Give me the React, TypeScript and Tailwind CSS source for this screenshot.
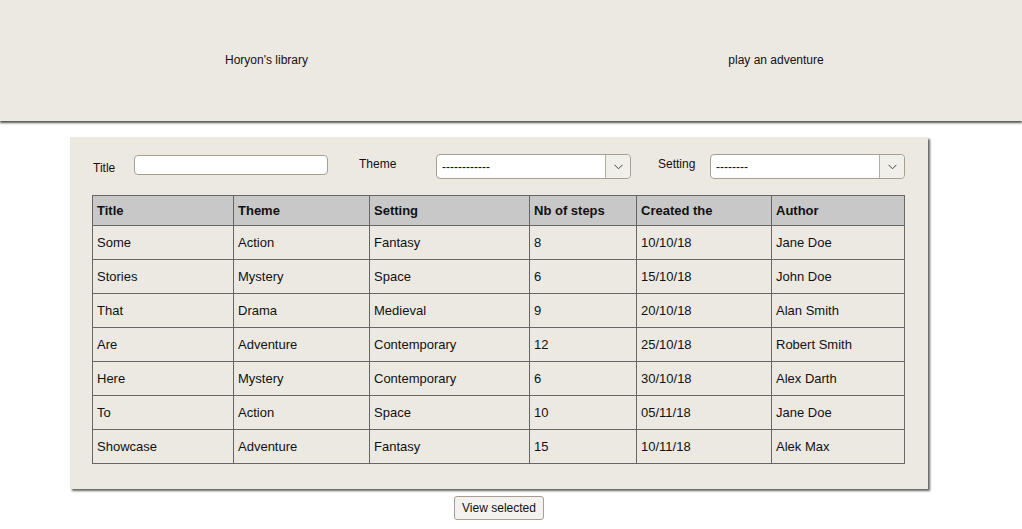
import React from 'react';

interface Story {
  title: string;
  theme: string;
  setting: string;
  steps: number;
  created: string;
  author: string;
}

const stories: Story[] = [
  { title: 'Some', theme: 'Action', setting: 'Fantasy', steps: 8, created: '10/10/18', author: 'Jane Doe' },
  { title: 'Stories', theme: 'Mystery', setting: 'Space', steps: 6, created: '15/10/18', author: 'John Doe' },
  { title: 'That', theme: 'Drama', setting: 'Medieval', steps: 9, created: '20/10/18', author: 'Alan Smith' },
  { title: 'Are', theme: 'Adventure', setting: 'Contemporary', steps: 12, created: '25/10/18', author: 'Robert Smith' },
  { title: 'Here', theme: 'Mystery', setting: 'Contemporary', steps: 6, created: '30/10/18', author: 'Alex Darth' },
  { title: 'To', theme: 'Action', setting: 'Space', steps: 10, created: '05/11/18', author: 'Jane Doe' },
  { title: 'Showcase', theme: 'Adventure', setting: 'Fantasy', steps: 15, created: '10/11/18', author: 'Alek Max' },
];

const columns = ['Title', 'Theme', 'Setting', 'Nb of steps', 'Created the', 'Author'];
const widths = ['w-[141px]', 'w-[136px]', 'w-[160px]', 'w-[107px]', 'w-[135px]', 'w-[133px]'];

function FakeSelect({ value }: { value: string }) {
  return (
    <div className="flex h-[25px] w-[195px] shrink-0 rounded-[4px] border border-[#a89f90] bg-white">
      <div className="flex flex-1 items-center pl-[5px] text-[12px] text-[#111]">{value}</div>
      <div className="flex w-[25px] items-center justify-center rounded-r-[4px] border-l border-[#b5ad9f] bg-[#f1efea]">
        <svg width="9" height="6" viewBox="0 0 9 6" fill="none">
          <path d="M0.5 0.8 L4.5 4.8 L8.5 0.8" stroke="#444" strokeWidth="1" />
        </svg>
      </div>
    </div>
  );
}

export default function App() {
  return (
    <div className="min-h-[529px] bg-white font-['Liberation_Sans',Arial,sans-serif] text-[#111]">
      {/* Top bar */}
      <header className="flex h-[121px] items-center bg-[#ece9e3] pb-[2px] pl-[14px] shadow-[0_2px_2px_#555]">
        <div className="w-[505px] shrink-0 text-center text-[12px]">Horyon's library</div>
        <div className="ml-[57px] w-[400px] shrink-0 text-center text-[12px]">play an adventure</div>
      </header>

      {/* Library panel */}
      <section className="ml-[70px] mt-[16px] w-[858px] bg-[#ece9e3] pb-[25px] pl-[22px] pr-[24px] pt-[17px] shadow-[2px_2px_2px_#666]">
        <div className="flex h-[41px] items-start pl-[1px]">
          <label className="mt-[5px] w-[41px] shrink-0 text-[12px]">Title</label>
          <input className="mt-[1px] h-[20px] w-[194px] shrink-0 rounded-[4px] border border-[#a89f90] bg-white outline-none" />
          <label className="ml-[31px] mt-[1px] w-[77px] shrink-0 text-[12px]">Theme</label>
          <FakeSelect value="------------" />
          <label className="ml-[27px] mt-[1px] w-[52px] shrink-0 text-[12px]">Setting</label>
          <FakeSelect value="--------" />
        </div>

        <table className="w-[812px] table-fixed border-collapse text-[13px]">
          <colgroup>
            {widths.map((w) => (
              <col key={w} className={w} />
            ))}
          </colgroup>
          <thead>
            <tr className="h-[30px] bg-[#c8c8c8]">
              {columns.map((c) => (
                <th key={c} className="border border-[#666] pl-[4px] text-left font-bold">
                  {c}
                </th>
              ))}
            </tr>
          </thead>
          <tbody>
            {stories.map((s) => (
              <tr key={s.title} className="h-[34px]">
                <td className="border border-[#666] pl-[4px]">{s.title}</td>
                <td className="border border-[#666] pl-[4px]">{s.theme}</td>
                <td className="border border-[#666] pl-[4px]">{s.setting}</td>
                <td className="border border-[#666] pl-[4px]">{s.steps}</td>
                <td className="border border-[#666] pl-[4px]">{s.created}</td>
                <td className="border border-[#666] pl-[4px]">{s.author}</td>
              </tr>
            ))}
          </tbody>
        </table>
      </section>

      <div className="flex pl-[454px] pt-[7px]">
        <button className="h-[24px] w-[90px] rounded-[3px] border border-[#a89f90] bg-[#f4f2ee] text-[12px] text-[#111]">
          View selected
        </button>
      </div>
    </div>
  );
}
